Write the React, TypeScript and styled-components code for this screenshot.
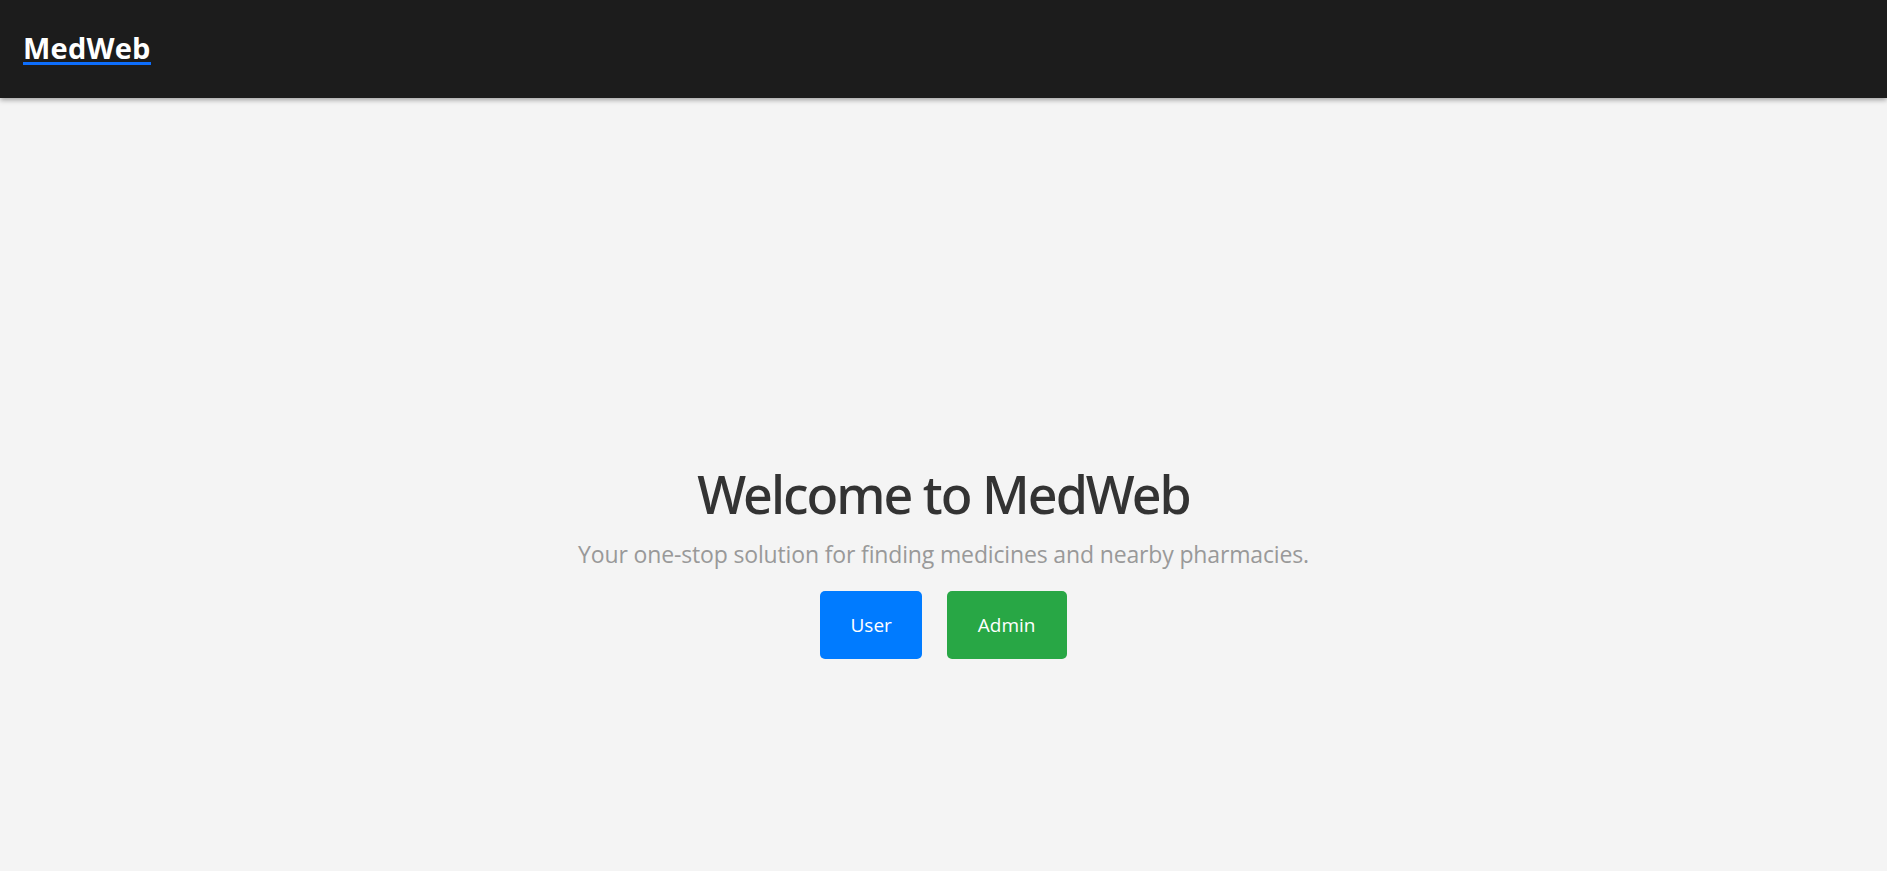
import React from "react";
import styled, { createGlobalStyle } from "styled-components";

const GlobalStyle = createGlobalStyle`
  html, body {
    margin: 0;
    padding: 0;
    background: #f4f4f4;
    font-family: "Open Sans", "Noto Sans", "Liberation Sans", sans-serif;
  }
  * { box-sizing: border-box; }
`;

const Page = styled.div`
  min-height: 871px;
  display: flex;
  flex-direction: column;
  background: #f4f4f4;
`;

const Header = styled.header`
  height: 98px;
  flex: none;
  display: flex;
  align-items: center;
  padding: 0 23px;
  background: #1c1c1c;
  box-shadow: 0 2px 5px rgba(0, 0, 0, 0.35);
  position: relative;
  z-index: 1;
`;

const Logo = styled.a`
  display: inline-block;
  color: #ffffff;
  font-size: 29px;
  font-weight: 700;
  line-height: 26px;
  letter-spacing: 0.2px;
  text-decoration: none;
  padding-bottom: 1px;
  border-bottom: 3px solid #0d6efd;
  cursor: pointer;
  margin-top: 2px;
`;

const Main = styled.main`
  flex: 1;
  display: flex;
  flex-direction: column;
  align-items: center;
  padding-top: 365px;
  text-align: center;
`;

const Title = styled.h1`
  margin: 0;
  font-family: "Noto Sans", "Open Sans", sans-serif;
  font-size: 52px;
  line-height: 1.2;
  font-weight: 500;
  color: #333333;
  letter-spacing: -2px;
`;

const Subtitle = styled.p`
  margin: 12px 0 0;
  font-size: 23px;
  line-height: 1.5;
  color: #999999;
  letter-spacing: -0.15px;
`;

const Buttons = styled.div`
  display: flex;
  gap: 25px;
  margin-top: 19px;
`;

const Button = styled.button<{ $variant: "primary" | "success" }>`
  height: 68px;
  padding: 0 ${(p) => (p.$variant === "primary" ? "30px" : "31px")};
  border: none;
  border-radius: 5px;
  font-family: inherit;
  font-size: 19px;
  color: #ffffff;
  cursor: pointer;
  background: ${(p) => (p.$variant === "primary" ? "#007bff" : "#28a745")};
`;

export default function App() {
  return (
    <>
      <GlobalStyle />
      <Page>
        <Header>
          <Logo>MedWeb</Logo>
        </Header>
        <Main>
          <Title>Welcome to MedWeb</Title>
          <Subtitle>Your one-stop solution for finding medicines and nearby pharmacies.</Subtitle>
          <Buttons>
            <Button $variant="primary">User</Button>
            <Button $variant="success">Admin</Button>
          </Buttons>
        </Main>
      </Page>
    </>
  );
}
